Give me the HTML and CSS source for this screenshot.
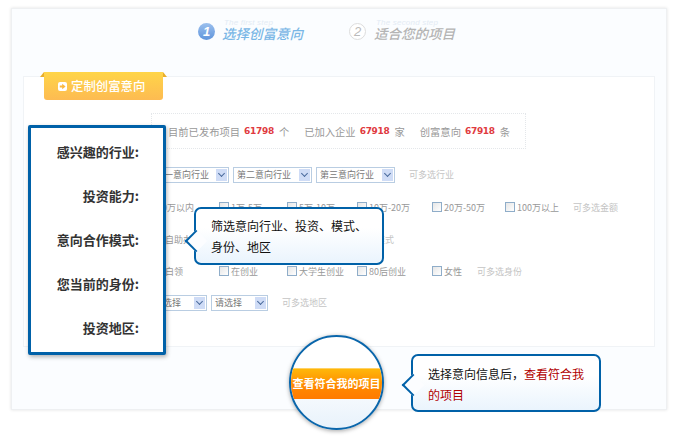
FILE: index.html
```html
<!DOCTYPE html>
<html lang="zh-CN">
<head>
<meta charset="utf-8">
<title>定制创富意向</title>
<link rel="stylesheet" href="styles.css">
</head>
<body>
<div class="stage">
  <div class="panel">
    <div class="steps">
      <div class="step step-on">
        <span class="num">1</span>
        <div class="step-text"><small>The first step</small><strong>选择创富意向</strong></div>
      </div>
      <div class="step step-off">
        <span class="num">2</span>
        <div class="step-text"><small>The second step</small><strong>适合您的项目</strong></div>
      </div>
    </div>
    <div class="inner">
      <div class="tab">
        <svg class="tab-ico" width="9" height="9" viewBox="0 0 9 9"><rect width="9" height="9" rx="2" fill="#fff"/><path d="M1.8 3.6H4.2V1.8L7.6 4.5 4.2 7.2V5.4H1.8Z" fill="#fbb93f"/></svg>
        定制创富意向
      </div>
      <div class="stats">
        <span>目前已发布项目</span><b>61798</b><span class="unit">个</span>
        <span>已加入企业</span><b>67918</b><span class="unit">家</span>
        <span>创富意向</span><b>67918</b><span>条</span>
      </div>
      <div class="row row-sel">
        <div class="sel w78"><span class="sel-t">第一意向行业</span><i class="arr"></i></div>
        <div class="sel w79"><span class="sel-t">第二意向行业</span><i class="arr"></i></div>
        <div class="sel w79"><span class="sel-t">第三意向行业</span><i class="arr"></i></div>
        <span class="hint hint-sel">可多选行业</span>
      </div>
      <div class="row row-opt">
        <label class="opt first-money"><i class="cb"></i>10万以内</label>
        <label class="opt w68"><i class="cb"></i>1万-5万</label>
        <label class="opt w70"><i class="cb"></i>5万-10万</label>
        <label class="opt w75"><i class="cb"></i>10万-20万</label>
        <label class="opt w73"><i class="cb"></i>20万-50万</label>
        <label class="opt w68"><i class="cb"></i>100万以上</label>
        <span class="hint">可多选金额</span>
      </div>
      <div class="row row-opt">
        <label class="opt first-mode"><i class="cb"></i>自助办</label>
        <label class="opt w68"><i class="cb"></i>合作</label>
        <label class="opt w62"><i class="cb"></i>加盟</label>
        <span class="hint">可多选模式</span>
      </div>
      <div class="row row-opt">
        <label class="opt first-mode"><i class="cb"></i>白领</label>
        <label class="opt w68"><i class="cb"></i>在创业</label>
        <label class="opt w70"><i class="cb"></i>大学生创业</label>
        <label class="opt w75"><i class="cb"></i>80后创业</label>
        <label class="opt w45"><i class="cb"></i>女性</label>
        <span class="hint">可多选身份</span>
      </div>
      <div class="row row-sel">
        <div class="sel w57 first-area"><span class="sel-t">请选择</span><i class="arr"></i></div>
        <div class="sel w57"><span class="sel-t">请选择</span><i class="arr"></i></div>
        <span class="hint hint-area">可多选地区</span>
      </div>
    </div>
  </div>

  <div class="labels">
    <p>感兴趣的行业:</p>
    <p>投资能力:</p>
    <p>意向合作模式:</p>
    <p>您当前的身份:</p>
    <p>投资地区:</p>
  </div>

  <div class="tip tip-filter">筛选意向行业、投资、模式、<br>身份、地区</div>

  <div class="lens"><div class="go">查看符合我的项目</div></div>

  <div class="tip tip-go">选择意向信息后，<em>查看符合我的项目</em></div>
</div>
</body>
</html>
```
FILE: styles.css
```css
* { box-sizing: border-box; }
html, body { margin: 0; padding: 0; background: #fff; }
body { font-family: "Noto Sans CJK SC", "Liberation Sans", sans-serif; font-size: 10px; color: #888; }
.stage { position: relative; width: 679px; height: 438px; overflow: hidden; padding: 8px 0 0 11px; }

.panel { width: 656px; height: 402px; background: #fbfdff; border: 1px solid #eef0f2; box-shadow: 0 0 3px rgba(0,0,0,.12); padding: 0 11px; }

.steps { height: 67px; display: flex; padding-left: 175px; }
.step { display: flex; width: 151px; padding-top: 14px; height: 50px; }
.num { width: 17px; height: 17px; border-radius: 50%; font: italic bold 13px/17px "Liberation Sans", sans-serif; text-align: center; flex: none; }
.step-on .num { background: linear-gradient(#9cc0ee, #5f95dc); color: #fff; }
.step-off .num { background: #fff; border: 1px solid #ddd; color: #bbb; line-height: 15px; font-weight: normal; }
.step-text { position: relative; margin-left: 7px; }
.step-text small { display: block; font: italic 8px/8px "Liberation Sans", sans-serif; letter-spacing: .2px; color: #e3ebf4; margin: -4px 0 0 2px; height: 5px; white-space: nowrap; }
.step-text strong { display: block; font-size: 13.5px; line-height: 18px; font-style: italic; font-weight: 500; white-space: nowrap; }
.step-on strong { color: #7ab7e6; }
.step-off strong { color: #b4b4b4; }
.step-off .step-text { margin-left: 8px; }

.inner { width: 632px; height: 271px; background: #fff; border: 1px solid #f0f3f6; padding: 0 0 0 127px; position: relative; }

.tab { position: absolute; left: 20px; top: -5px; width: 119px; height: 28px; border-radius: 0 0 3px 3px; background: linear-gradient(#ffd548, #fdbb52); color: #fff; font-size: 12.4px; line-height: 28px; font-weight: 500; display: flex; align-items: center; padding-left: 14px; gap: 4px; white-space: nowrap; }
.tab::before, .tab::after { content: ""; position: absolute; top: 0; width: 0; height: 0; border-bottom: 5px solid #e9ae2b; }
.tab::before { left: -4px; border-left: 4px solid transparent; }
.tab::after { right: -4px; border-right: 4px solid transparent; }

.stats { margin-top: 36px; width: 375px; height: 36px; border: 1px dotted #e4e7ea; display: flex; align-items: center; font-size: 10.3px; color: #999; padding-left: 16px; white-space: nowrap; }
.stats b { font: bold 9px "DejaVu Sans", sans-serif; color: #df3a40; margin: 0 5px 0 4px; letter-spacing: -.3px; }
.stats .unit { margin-right: 15px; }

.row { display: flex; align-items: center; white-space: nowrap; }
.row-sel { height: 17px; gap: 4px; }
.stats + .row-sel { margin-top: 17px; }
.row-opt { height: 16px; margin-top: 16px; }
.row-opt + .row-sel { margin-top: 15px; }

.sel { height: 16px; border: 1px solid #b9cde2; background: #fff; display: flex; align-items: center; justify-content: space-between; padding: 1px; color: #777; font-size: 9px; overflow: hidden; }
.w78 { width: 78px; } .w79 { width: 79px; } .w57 { width: 57px; }
.first-area { margin-left: -1px; }
.sel-t { padding-left: 2px; line-height: 12px; }
.arr { width: 11px; height: 12px; flex: none; background: #cfdcf6; position: relative; }
.arr::after { content: ""; position: absolute; left: 3px; top: 2px; width: 4px; height: 4px; border-right: 1.5px solid #4a6a9c; border-bottom: 1.5px solid #4a6a9c; transform: rotate(45deg); }

.opt { display: flex; align-items: center; gap: 2px; color: #999; font-size: 9px; flex: none; }
.w68 { width: 68px; } .w70 { width: 70px; } .w75 { width: 75px; } .w73 { width: 73px; } .w45 { width: 45px; } .w62 { width: 62px; }
.first-money { width: 74px; margin-left: -6px; }
.first-mode { width: 66px; margin-left: 2px; }
.cb { width: 10px; height: 10px; flex: none; border: 1px solid #8fadc9; background: linear-gradient(135deg, #e6e6e6, #fff); }
.hint { color: #c4c4c4; font-size: 9px; }
.hint-sel { margin-left: 10px; }
.hint-area { margin-left: 10px; }

.labels { position: absolute; left: 28px; top: 125px; width: 138px; height: 230px; background: #fff; border: 3px solid #0061a8; border-radius: 2px; box-shadow: 1px 2px 4px rgba(0,0,0,.3); padding: 15px 24px 0 0; z-index: 3; }
.labels p { margin: 0 0 26px; height: 18px; line-height: 18px; font-size: 13px; font-weight: 700; color: #333; text-align: right; white-space: nowrap; }

.tip { position: absolute; z-index: 4; border: 2px solid #0061a8; border-radius: 7px; background: linear-gradient(#fff 35%, #eaf4fd); font-size: 12px; line-height: 21px; color: #111; }
.tip::before { content: ""; position: absolute; left: -8px; width: 14px; height: 14px; background: #fcfdff; border-left: 2px solid #0061a8; border-bottom: 2px solid #0061a8; transform: rotate(45deg); }
.tip-filter { left: 194px; top: 207px; width: 190px; height: 58px; padding: 6px 0 0 15px; }
.tip-filter::before { top: 24px; }
.tip-go { left: 411px; top: 354px; width: 190px; height: 58px; padding: 7px 14px 0 15px; }
.tip-go::before { top: 21px; }
.tip-go em { font-style: normal; color: #b10000; }

.lens { position: absolute; z-index: 4; left: 289px; top: 335px; width: 95px; height: 95px; border-radius: 50%; border: 2px solid #0a66ab; background: linear-gradient(#fff 40%, #e8f2fb); box-shadow: 0 1px 4px rgba(0,0,0,.35); overflow: hidden; display: flex; align-items: center; }
.go { width: 100%; height: 31px; margin-top: 2px; background: linear-gradient(#ffb70a, #ff8a00 55%, #ff7a00); border-top: 1px solid #ffd265; color: #fff; font-size: 11px; font-weight: 700; line-height: 29px; text-align: center; white-space: nowrap; }
```
